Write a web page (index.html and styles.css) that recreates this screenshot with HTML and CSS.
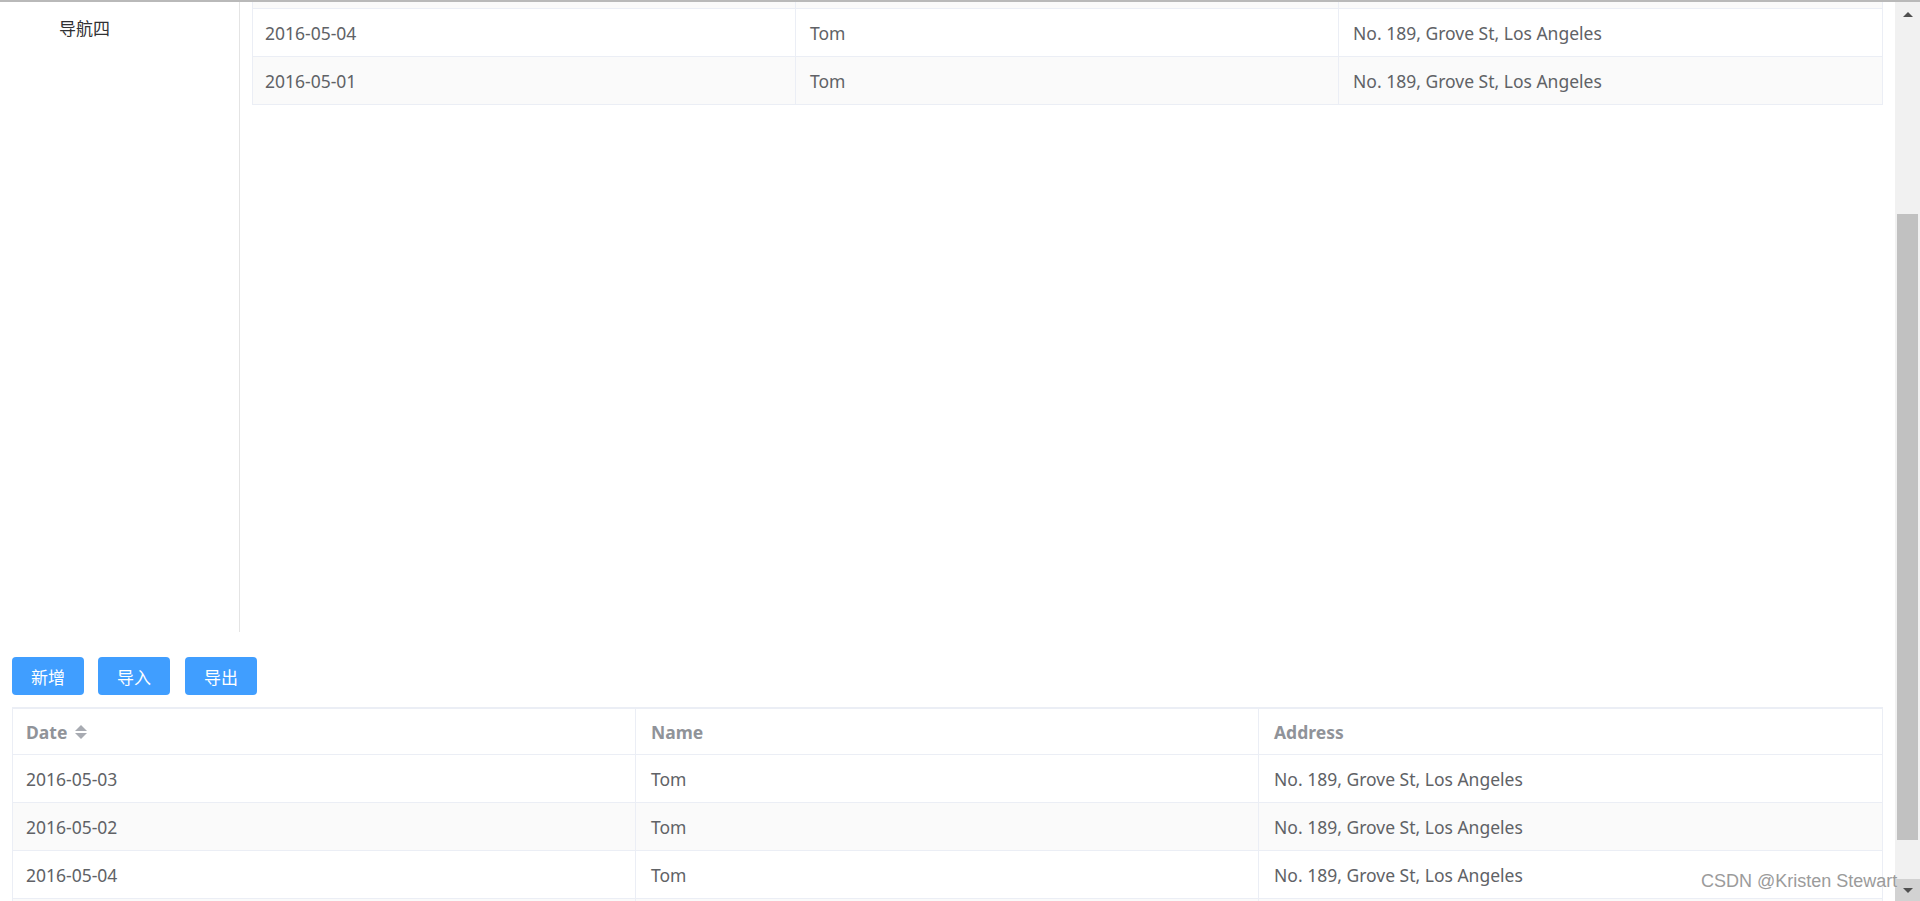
FILE: index.html
```html
<!DOCTYPE html>
<html lang="zh">
<head>
<meta charset="utf-8">
<title>Table</title>
<link rel="stylesheet" href="styles.css">
</head>
<body>
<div class="topbar"></div>
<div class="frame">
  <div class="page">
    <div class="layout">
      <aside class="aside">
        <div class="menu-item">导航四</div>
      </aside>
      <main class="main">
        <div class="table">
          <div class="row partial striped"><div class="cell"></div><div class="cell"></div><div class="cell"></div></div>
          <div class="row"><div class="cell">2016-05-04</div><div class="cell">Tom</div><div class="cell">No. 189, Grove St, Los Angeles</div></div>
          <div class="row striped last"><div class="cell">2016-05-01</div><div class="cell">Tom</div><div class="cell">No. 189, Grove St, Los Angeles</div></div>
        </div>
      </main>
    </div>
    <div class="toolbar">
      <button class="btn">新增</button>
      <button class="btn">导入</button>
      <button class="btn">导出</button>
    </div>
    <div class="table table-lower">
      <div class="row head">
        <div class="cell">Date <span class="caret"><i class="up"></i><i class="down"></i></span></div>
        <div class="cell">Name</div>
        <div class="cell">Address</div>
      </div>
      <div class="row"><div class="cell">2016-05-03</div><div class="cell">Tom</div><div class="cell">No. 189, Grove St, Los Angeles</div></div>
      <div class="row striped"><div class="cell">2016-05-02</div><div class="cell">Tom</div><div class="cell">No. 189, Grove St, Los Angeles</div></div>
      <div class="row"><div class="cell">2016-05-04</div><div class="cell">Tom</div><div class="cell">No. 189, Grove St, Los Angeles</div></div>
      <div class="row striped tail"><div class="cell"></div><div class="cell"></div><div class="cell"></div></div>
    </div>
  </div>
  <div class="scrollbar">
    <div class="sb-btn sb-up"><span class="tri-up"></span></div>
    <div class="sb-track"><div class="sb-thumb"></div></div>
    <div class="sb-btn sb-down"><span class="tri-down"></span></div>
  </div>
  <div class="watermark">CSDN @Kristen Stewart</div>
</div>
</body>
</html>
```

FILE: styles.css
```css
* { box-sizing: border-box; }
html, body { margin: 0; padding: 0; }
body {
  width: 1920px;
  height: 901px;
  overflow: hidden;
  background: #fff;
  font-family: "Noto Sans", "Noto Sans CJK SC", sans-serif;
  color: #606266;
}
.topbar { height: 2px; background: #b9b9b9; }
.frame { display: flex; height: 899px; position: relative; }
.page { flex: 1; min-width: 0; overflow: hidden; }

.layout { display: flex; height: 630px; }
.aside { width: 240px; border-right: 1px solid #e4e4e4; flex: none; }
.menu-item {
  padding: 14px 0 0 59px;
  font-size: 17px;
  line-height: 24px;
  color: #303133;
  font-family: "Noto Sans CJK SC", sans-serif;
  font-weight: 400;
}
.main { flex: 1; padding: 0 12px; min-width: 0; }

.table { border: 1px solid #ebeef5; border-top: none; border-bottom: none; }
.row {
  display: grid;
  grid-template-columns: repeat(3, 1fr);
  height: 48px;
  border-bottom: 1px solid #ebeef5;
  font-size: 17.5px;
}
.row.partial { height: 7px; }
.row.tail { height: 8px; border-bottom: none; }
.row.striped { background: #fafafa; }
.cell {
  display: flex;
  align-items: center;
  padding-left: 12px;
  border-right: 1px solid #ebeef5;
  white-space: nowrap;
}
.cell + .cell { padding-left: 14px; }
.cell:last-child { border-right: none; }

.toolbar { display: flex; gap: 14px; margin: 25px 0 12px 12px; }
.btn {
  width: 72px;
  height: 38px;
  border: none;
  border-radius: 4px;
  background: #409eff;
  color: #fff;
  font-family: "Noto Sans CJK SC", sans-serif;
  font-size: 17px;
  padding: 0;
}
.toolbar .btn:nth-child(3) { margin-left: 1px; }

.table-lower { margin: 0 12px 0 12px; border-top: 2px solid #ebeef5; }
.row.head { height: 46px; font-weight: 700; color: #909399; }
.table-lower .row .cell { padding-left: 13px; }
.table-lower .row .cell + .cell { padding-left: 15px; }

.caret {
  display: inline-flex;
  flex-direction: column;
  gap: 2px;
  margin-left: 8px;
}
.caret i { display: block; width: 0; height: 0; border-left: 6px solid transparent; border-right: 6px solid transparent; }
.caret .up { border-bottom: 6px solid #a8abb2; }
.caret .down { border-top: 6px solid #a8abb2; }

.watermark {
  position: absolute;
  left: 1701px;
  top: 869px;
  font-family: "Liberation Sans", Arial, sans-serif;
  font-size: 18px;
  color: #9b9b9b;
  text-shadow: 0 0 1px #fff;
  white-space: nowrap;
}

.scrollbar { width: 25px; flex: none; background: #f1f1f1; display: flex; flex-direction: column; }
.sb-btn { height: 22px; display: flex; align-items: center; justify-content: center; flex: none; }
.sb-up { height: 212px; align-items: flex-start; padding-top: 10px; }
.sb-track { flex: 1; padding: 0 2px; display: flex; flex-direction: column; }
.sb-thumb { height: 626px; background: #c1c1c1; }
.sb-down { background: #d2d2d2; }
.tri-up { width: 0; height: 0; border-left: 5px solid transparent; border-right: 5px solid transparent; border-bottom: 5px solid #505050; }
.tri-down { width: 0; height: 0; border-left: 5px solid transparent; border-right: 5px solid transparent; border-top: 5px solid #505050; }
```
